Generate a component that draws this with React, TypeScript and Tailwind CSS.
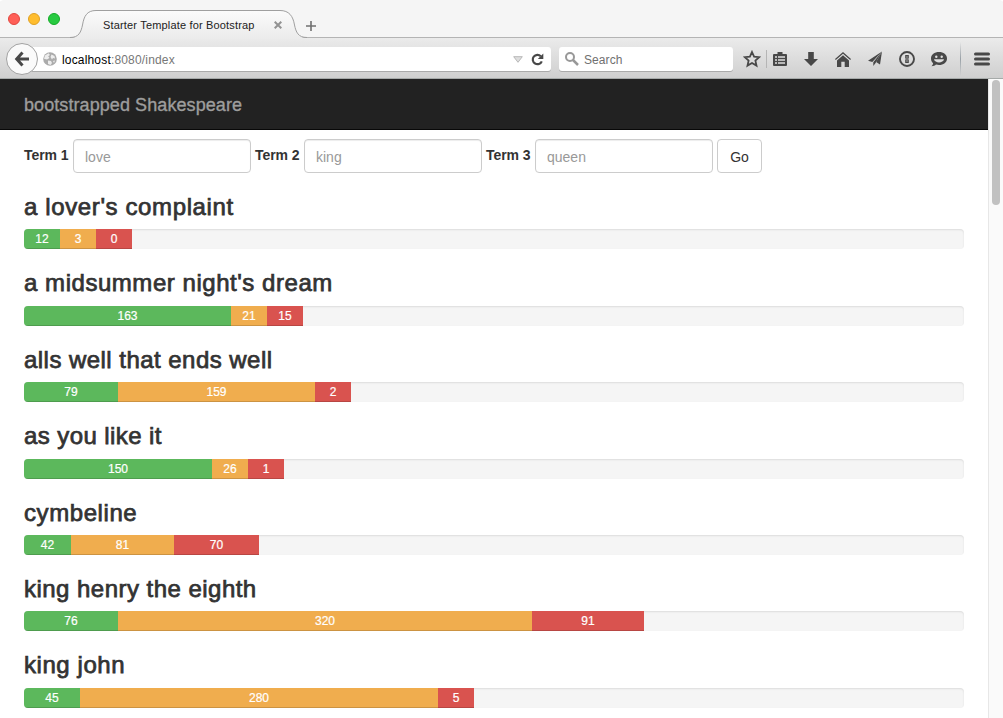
const FONT = "font-['Liberation_Sans',Arial,sans-serif]";

const plays = [
  { title: "a lover's complaint", counts: [12, 3, 0], widths: [36, 36, 36], spacing: 'tracking-[0.62px]' },
  { title: "a midsummer night's dream", counts: [163, 21, 15], widths: [207, 36, 36], spacing: 'tracking-[0.54px]' },
  { title: 'alls well that ends well', counts: [79, 159, 2], widths: [94, 197, 36], spacing: 'tracking-[0.46px]' },
  { title: 'as you like it', counts: [150, 26, 1], widths: [188, 36, 36], spacing: 'tracking-[0.42px]' },
  { title: 'cymbeline', counts: [42, 81, 70], widths: [47, 103, 85], spacing: 'tracking-[0.58px]' },
  { title: 'king henry the eighth', counts: [76, 320, 91], widths: [94, 414, 112], spacing: 'tracking-[0.47px]' },
  { title: 'king john', counts: [45, 280, 5], widths: [56, 358, 36], spacing: 'tracking-[0.56px]' },
];

const barColors = ['bg-[#5cb85c]', 'bg-[#f0ad4e]', 'bg-[#d9534f]'];

function TitleBar() {
  return (
    <div className="relative z-10 flex h-[38px] shrink-0 rounded-t bg-[#f5f5f5] shadow-[inset_0_-1px_0_#b4b4b4]">
      <div className="flex w-[70px] gap-2 pl-2 pt-[13px]">
        <div className="size-3 rounded-full border border-[#e2463f] bg-[#ff5f57]" />
        <div className="size-3 rounded-full border border-[#e0a123] bg-[#ffbd2e]" />
        <div className="size-3 rounded-full border border-[#14ab27] bg-[#28ca41]" />
      </div>
      <div className="relative h-[39px] w-[237px]">
        <svg className="absolute inset-0" width="237" height="39" viewBox="0 0 237 39">
          <defs>
            <linearGradient id="tab" x1="0" y1="0" x2="0" y2="1">
              <stop offset="0" stopColor="#fbfbfb" />
              <stop offset="1" stopColor="#ebebeb" />
            </linearGradient>
          </defs>
          <path d="M0 39V38C9 38 11 32 12.500 25C14 16 17 10.500 26 10.500H210C219 10.500 223 16 224.500 25C226 32 228 38 237 38V39Z" fill="url(#tab)" />
          <path d="M0 37.500C9 37.500 11 32 12.500 25C14 16 17 10.500 26 10.500H210C219 10.500 223 16 224.500 25C226 32 228 37.500 237 37.500" fill="none" stroke="#9f9f9f" />
        </svg>
        <div className="relative flex items-center justify-between pl-[33px] pr-[25px] pt-[17px]">
          <span className="whitespace-nowrap text-[11px] leading-4 tracking-[0.17px] text-[#222]">Starter Template for Bootstrap</span>
          <svg width="8" height="8" viewBox="0 0 8 8" stroke="#929292" strokeWidth="2"><path d="M.7.700 7.300 7.300M7.300.700.700 7.300" /></svg>
        </div>
      </div>
      <svg className="-ml-1 mt-5" width="16" height="12" viewBox="0 0 16 12" stroke="#707070" strokeWidth="1.600"><path d="M3 6h10M8 1v10" /></svg>
    </div>
  );
}

function ToolBar() {
  return (
    <div className="flex h-[41px] shrink-0 items-center border-b border-[#a6aaa9] bg-linear-to-b from-[#ebebeb] to-[#cfcfcf] pt-[2px]">
      <div className="relative z-10 ml-1.5 flex size-8 shrink-0 items-center justify-center rounded-full border border-[#a2a2a2] bg-[#fafafa]">
        <svg width="16" height="16" viewBox="0 0 16 16" fill="none" stroke="#484848" strokeWidth="3"><path d="M8.500 1.500 2.700 8l5.800 6.500M3 8h12" /></svg>
      </div>
      <div className="-ml-2 flex h-6 w-[521px] shrink-0 items-center rounded-[3px] bg-white pl-[13px] shadow-[0_1px_0_#aaa]">
        <svg width="14" height="14" viewBox="0 0 14 14">
          <circle cx="7" cy="7" r="6.800" fill="#ababab" />
          <path d="M2 3.500 5.500 1.300 7 3 5.200 4.300 6.500 6 4 7.500 1 6.800ZM8.500 2.500l3 1.500.5 2.500-2-.5-1 1.500-1.500-2.500ZM5 8.500l3 .5 1 2-1.500 2-2.500-1ZM10 9l2-.5-1 2.500Z" fill="#ededed" />
        </svg>
        <span className="ml-[5px] pt-px text-xs leading-4 tracking-[0.17px] text-[#777]"><span className="text-black">localhost</span>:8080/index</span>
        <svg className="ml-auto mr-2" width="10" height="7" viewBox="0 0 10 7"><path d="M.7.700h8.600L5 6.300Z" fill="#dedede" stroke="#b8b8b8" /></svg>
        <svg className="mr-[7px]" width="13" height="13" viewBox="0 0 13 13"><path d="M10.800 8.300A4.700 4.700 0 1 1 9.800 3.200" fill="none" stroke="#484848" strokeWidth="2.200" /><path d="M12.300.500V6H6.800Z" fill="#484848" /></svg>
      </div>
      <div className="ml-2 flex h-6 w-[174px] shrink-0 items-center rounded-[3px] bg-white pl-1.5 shadow-[0_1px_0_#aaa]">
        <svg width="14" height="14" viewBox="0 0 14 14" fill="none" stroke="#989898"><circle cx="5" cy="5" r="4" strokeWidth="2" /><path d="m8 8 5 5" strokeWidth="2.500" /></svg>
        <span className="ml-[5px] pt-px text-xs leading-4 tracking-[0.08px] text-[#707070]">Search</span>
      </div>
      <svg className="ml-2.5 shrink-0" width="18" height="18" viewBox="0 0 18 18"><path d="m9 2 2.100 4.700 5.100.500-3.800 3.400 1.100 5-4.500-2.600-4.500 2.600 1.100-5L1.800 7.200l5.100-.5Z" fill="none" stroke="#484848" strokeWidth="1.800" /></svg>
      <div className="ml-[5px] h-[18px] w-px shrink-0 bg-[#b5b5b5]" />
      <svg className="ml-1.5 shrink-0" width="14" height="16" viewBox="0 0 14 16"><path d="M1 3h3.500V1h5v2H13a1 1 0 0 1 1 1v10a1 1 0 0 1-1 1H1a1 1 0 0 1-1-1V4a1 1 0 0 1 1-1Z" fill="#484848" /><path d="M2 6h2M5 6h7M2 9h2M5 9h7M2 12h2M5 12h7" stroke="#dedede" strokeWidth="1.300" /></svg>
      <svg className="ml-[17px] shrink-0" width="14" height="14" viewBox="0 0 14 14"><path d="M4.200 0h5.600v7H14l-7 7-7-7h4.200Z" fill="#484848" /></svg>
      <svg className="ml-[17px] shrink-0" width="16" height="15" viewBox="0 0 16 15" fill="#484848"><path d="m8 0 8 7-.8 1L8 1.800.800 8 0 7Z" /><path d="M8 3.200 14 8.500V15H9.700V9.800H6.300V15H2V8.500Z" /></svg>
      <svg className="ml-[17px] shrink-0" width="14" height="16" viewBox="0 0 14 16" fill="#484848"><path d="M14 .5 0 9.800l4.300 1.100ZM14 .5 5.300 11.200V15l2.300-3Z" /><path d="M14 .5 8.100 11.100 12 13.500Z" /></svg>
      <svg className="ml-[17px] shrink-0" width="16" height="16" viewBox="0 0 16 16"><circle cx="8" cy="8" r="7" fill="none" stroke="#484848" strokeWidth="1.900" /><path d="M6.200 4h3.600v3l-.6 1 .6 1v3H6.200V9l.6-1-.6-1Z" fill="#484848" /><path d="M8 5v6" stroke="#c8c8c8" strokeWidth=".7" /></svg>
      <svg className="ml-4 shrink-0" width="16" height="16" viewBox="0 0 16 16"><path d="M8 1c4.500 0 8 2.500 8 6.500S12.500 14 8 14c-1 0-2-.1-3-.4C4 14.500 2.500 15.200.500 15.300c1-.9 1.500-2 1.600-3C.8 11.100 0 9.500 0 7.500 0 3.500 3.500 1 8 1Z" fill="#484848" /><circle cx="5.300" cy="5.700" r="1.200" fill="#dedede" /><circle cx="10.700" cy="5.700" r="1.200" fill="#dedede" /><path d="M3 8.300h10c-.8 4.200-9.200 4.200-10 0Z" fill="#dedede" /></svg>
      <div className="ml-[13px] h-[34px] w-px shrink-0 bg-linear-to-b from-transparent via-[#98a0a6] to-transparent" />
      <svg className="ml-[13px] shrink-0" width="16" height="14" viewBox="0 0 16 14" stroke="#484848" strokeWidth="3" strokeLinecap="round"><path d="M1.500 2h13M1.500 7h13M1.500 12h13" /></svg>
    </div>
  );
}

function Term({ n, placeholder }: { n: number; placeholder: string }) {
  return (
    <label className="mr-1 flex">
      <span className="w-[49px] whitespace-nowrap pt-1.5 text-sm leading-5 font-bold tracking-[-0.05px] text-[#333]">Term {n}</span>
      <input
        placeholder={placeholder}
        className="h-[34px] w-[178px] rounded border border-[#ccc] bg-white px-[11px] pt-[2px] text-sm text-[#555] shadow-[inset_0_1px_1px_rgba(0,0,0,0.075)] outline-none placeholder:text-[#999]"
      />
    </label>
  );
}

function PlayRow({ play }: { play: (typeof plays)[number] }) {
  return (
    <section className="mb-5">
      <h3 className={`mb-2.5 h-[26.4px] whitespace-nowrap text-2xl leading-[28.6px] text-[#333] [-webkit-text-stroke:0.75px_#333] ${play.spacing}`}>{play.title}</h3>
      <div className="flex h-5 overflow-hidden rounded bg-[#f5f5f5] shadow-[inset_0_1px_2px_rgba(0,0,0,0.1)]">
        {play.counts.map((count, i) => (
          <div
            key={i}
            style={{ width: play.widths[i] }}
            className={`shrink-0 text-center text-xs leading-[21px] text-white shadow-[inset_0_-1px_0_rgba(0,0,0,0.15)] [-webkit-text-stroke:0.2px_white] ${barColors[i]}`}
          >
            {count}
          </div>
        ))}
      </div>
    </section>
  );
}

export default function App() {
  return (
    <div className={`flex h-[718px] w-[1003px] flex-col overflow-hidden bg-white ${FONT}`}>
      <TitleBar />
      <ToolBar />
      <div className="flex min-h-0 flex-1">
        <main className="w-[988px] overflow-hidden bg-white">
          <nav className="flex h-[51px] items-center border-b border-[#080808] bg-[#222] pl-6 pt-[2px] text-lg leading-5 tracking-[0.08px] text-[#9d9d9d] [-webkit-text-stroke:0.35px_#9d9d9d]">bootstrapped Shakespeare</nav>
          <div className="px-6 pt-[9px]">
            <form className="mb-5 flex">
              <Term n={1} placeholder="love" />
              <Term n={2} placeholder="king" />
              <Term n={3} placeholder="queen" />
              <button type="button" className="h-[34px] w-[45px] rounded border border-[#ccc] bg-white pt-[2px] text-sm text-[#333]">Go</button>
            </form>
            {plays.map((play) => <PlayRow key={play.title} play={play} />)}
          </div>
        </main>
        <aside className="flex w-[15px] justify-center border-l border-[#e7e7e7] bg-[#fafafa] pt-px">
          <div className="h-[125px] w-2 rounded-full bg-[#c1c1c1]" />
        </aside>
      </div>
    </div>
  );
}
